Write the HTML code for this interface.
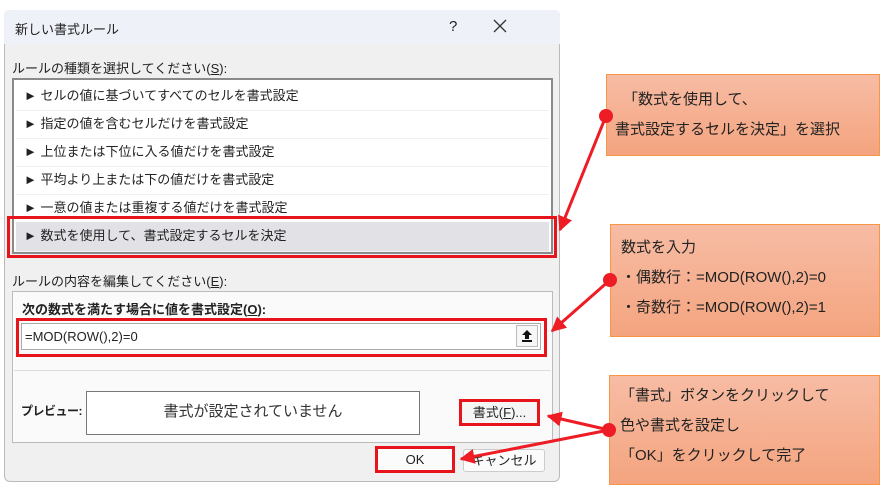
<!DOCTYPE html>
<html><head><meta charset="utf-8"><style>
body{margin:0;width:886px;height:500px;background:#fff;position:relative;overflow:hidden;font-family:"Liberation Sans","Noto Sans CJK JP",sans-serif;color:#222;}
.a{position:absolute;}
.dlg{left:4px;top:10px;width:556px;height:472px;background:#f0f0f0;border:1px solid #bbb;border-radius:6px;box-sizing:border-box;}
.title{left:4px;top:10px;width:556px;height:34px;background:#eef2f8;border-radius:6px 6px 0 0;}
.t{font-size:13px;white-space:nowrap;}
.list{left:12px;top:78px;width:541px;height:176px;background:#fff;border:2px solid #8a8a8a;box-sizing:border-box;}
.row{position:absolute;left:2px;right:2px;height:28px;border-bottom:1px solid #f0f0f0;font-size:13px;line-height:28px;padding-left:8px;}
.red{border:3px solid #e8141c;box-sizing:border-box;}
.box{background:linear-gradient(#f7bca4,#f4a47f);border:1px solid #f79646;box-sizing:border-box;font-size:15px;color:#222;white-space:nowrap;}
</style></head><body>
<div class="a dlg"></div>
<div class="a title"></div>
<div class="a t" style="left:15px;top:19px;">新しい書式ルール</div>
<div class="a t" style="left:449px;top:18px;font-size:15px;">?</div>
<svg class="a" style="left:492px;top:18px" width="16" height="16"><path d="M2,2L14,14M14,2L2,14" stroke="#333" stroke-width="1.3"/></svg>
<div class="a t" style="left:12px;top:58px;">ルールの種類を選択してください(<u>S</u>):</div>
<div class="a list">
<div class="row" style="top:2px">► セルの値に基づいてすべてのセルを書式設定</div>
<div class="row" style="top:30px">► 指定の値を含むセルだけを書式設定</div>
<div class="row" style="top:58px">► 上位または下位に入る値だけを書式設定</div>
<div class="row" style="top:86px">► 平均より上または下の値だけを書式設定</div>
<div class="row" style="top:114px">► 一意の値または重複する値だけを書式設定</div>
<div class="row" style="top:142px;background:#e2e1e6;height:29px;">► 数式を使用して、書式設定するセルを決定</div>
</div>
<div class="a red" style="left:7px;top:216px;width:550px;height:42px;"></div>
<div class="a t" style="left:12px;top:271px;">ルールの内容を編集してください(<u>E</u>):</div>
<div class="a" style="left:12px;top:291px;width:541px;height:152px;background:#fafafa;border:1px solid #bbb;box-sizing:border-box;"></div>
<div class="a t" style="left:22px;top:299px;font-weight:bold;">次の数式を満たす場合に値を書式設定(<u>O</u>):</div>
<div class="a red" style="left:16px;top:318px;width:531px;height:39px;"></div>
<div class="a" style="left:21px;top:323px;width:520px;height:27px;background:#fff;border:1px solid #aaa;box-sizing:border-box;"></div>
<div class="a t" style="left:25px;top:329px;">=MOD(ROW(),2)=0</div>
<div class="a" style="left:516px;top:325px;width:22px;height:22px;border:1px solid #bbb;box-sizing:border-box;background:#f7f7f7;"></div>
<svg class="a" style="left:521px;top:329px" width="12" height="14"><path d="M6,1L1,6H4V10H8V6H11Z" fill="#111"/><rect x="1" y="11" width="10" height="2" fill="#111"/></svg>
<div class="a" style="left:14px;top:370px;width:537px;height:1px;background:#ddd;"></div>
<div class="a t" style="left:21px;top:402px;font-weight:bold;font-size:12px;letter-spacing:-0.5px;">プレビュー:</div>
<div class="a" style="left:86px;top:391px;width:334px;height:44px;background:#fff;border:1px solid #777;box-sizing:border-box;font-size:15px;text-align:center;line-height:40px;color:#333;">書式が設定されていません</div>
<div class="a red" style="left:459px;top:399px;width:81px;height:27px;font-size:13px;text-align:center;line-height:21px;background:#f5f5f5;">書式(<u>F</u>)...</div>
<div class="a" style="left:463px;top:449px;width:82px;height:23px;border:1px solid #ccc;border-radius:3px;background:#fbfbfb;box-sizing:border-box;font-size:13px;text-align:center;line-height:21px;">キャンセル</div>
<div class="a red" style="left:375px;top:446px;width:80px;height:27px;background:#fbfbfb;font-size:13px;text-align:center;line-height:21px;">OK</div>

<div class="a box" style="left:606px;top:74px;width:274px;height:82px;padding:10px 0 0 16px;line-height:30px;">「数式を使用して、<br><span style="margin-left:-8px">書式設定するセルを決定」を選択</span></div>
<div class="a box" style="left:610px;top:224px;width:270px;height:113px;padding:8px 0 0 10px;line-height:30px;">数式を入力<br>・偶数行：=MOD(ROW(),2)=0<br>・奇数行：=MOD(ROW(),2)=1</div>
<div class="a box" style="left:609px;top:375px;width:271px;height:110px;padding:5px 0 0 10px;line-height:30px;">「書式」ボタンをクリックして<br>色や書式を設定し<br>「OK」をクリックして完了</div>

<svg class="a" style="left:0;top:0" width="886" height="500">
<defs><marker id="h" viewBox="0 0 10 10" refX="9" refY="5" markerWidth="5" markerHeight="5" orient="auto"><path d="M0,0L10,5L0,10z" fill="#ee1c24"/></marker></defs>
<g stroke="#ee1c24" stroke-width="3" fill="none">
<line x1="606" y1="116" x2="560" y2="230" marker-end="url(#h)"/>
<line x1="610" y1="280" x2="552" y2="331" marker-end="url(#h)"/>
<line x1="609" y1="430" x2="548" y2="416" marker-end="url(#h)"/>
<line x1="609" y1="430" x2="461" y2="459" marker-end="url(#h)"/>
</g>
<g fill="#ee1c24"><circle cx="606" cy="116" r="7"/><circle cx="610" cy="280" r="7"/><circle cx="609" cy="430" r="7"/></g>
</svg>
</body></html>
